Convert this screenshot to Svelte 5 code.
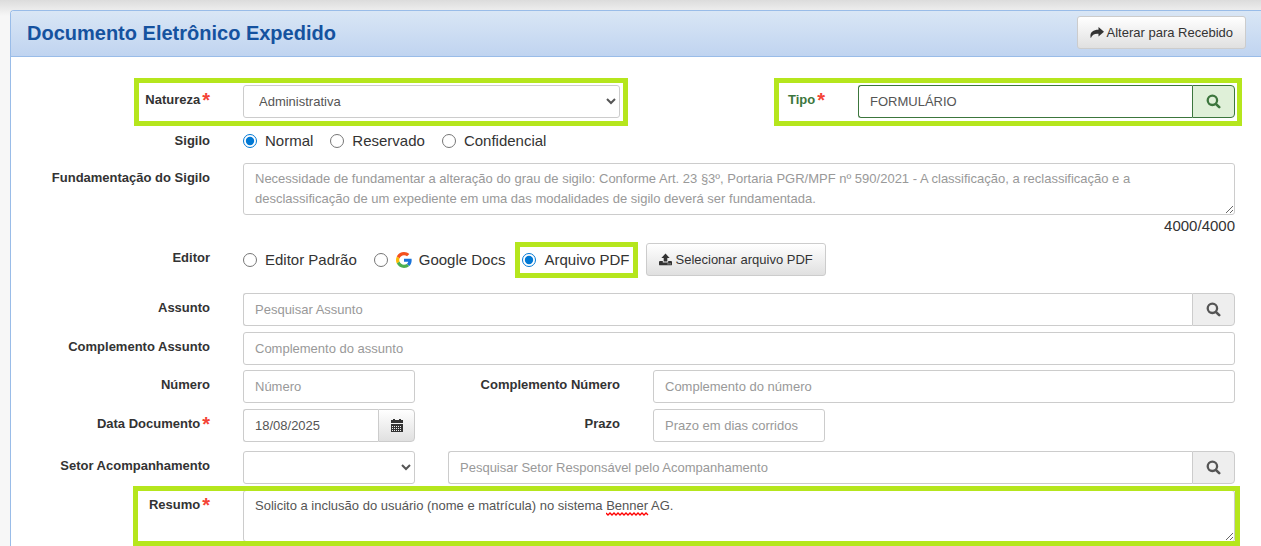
<script>
  let natureza = $state('Administrativa');
  let tipo = $state('FORMULÁRIO');
  let sigilo = $state('Normal');
  let fundamentacao = $state('');
  let editor = $state('pdf');
  let assunto = $state('');
  let dataDocumento = $state('18/08/2025');
  let setor = $state('');
  let resumo = $state('Solicito a inclusão do usuário (nome e matrícula) no sistema Benner AG.');

  const maxLength = 4000;
  const niveisSigilo = ['Normal', 'Reservado', 'Confidencial'];

  let restantes = $derived(maxLength - fundamentacao.length);
</script>

{#snippet searchIcon()}
  <svg class="icon" width="15" height="15" viewBox="0 0 15 15" aria-hidden="true">
    <circle cx="6.4" cy="6.3" r="4.7" fill="none" stroke="currentColor" stroke-width="2.3" />
    <path d="M9.8 9.8 L13.2 13.2" stroke="currentColor" stroke-width="2.6" stroke-linecap="round" />
  </svg>
{/snippet}

{#snippet required()}
  <span class="required">*</span>
{/snippet}

<div class="page">
  <section class="panel">
    <header class="panel-header">
      <h1>Documento Eletrônico Expedido</h1>
      <button type="button" class="btn">
        <svg width="14" height="12" viewBox="0 0 14 12" aria-hidden="true">
          <path fill="currentColor" d="M8.500 0 L14 4.800 L8.500 9.500 V6.800 C4.500 6.500 2.200 7.600 0.800 11.200 C-0.600 6.500 2 2.800 8.500 2.800 Z" />
        </svg>
        Alterar para Recebido
      </button>
    </header>

    <form class="form">
      <div class="row">
        <div class="group half mark mark-natureza">
          <label class="label" for="natureza">Natureza{@render required()}</label>
          <select id="natureza" class="control span-4" bind:value={natureza}>
            <option>Administrativa</option>
          </select>
        </div>
        <div class="group half success mark mark-tipo">
          <label class="label" for="tipo">Tipo{@render required()}</label>
          <div class="input-group span-4">
            <input id="tipo" class="control" type="text" bind:value={tipo} />
            <button type="button" class="addon" aria-label="Pesquisar tipo">{@render searchIcon()}</button>
          </div>
        </div>
      </div>

      <div class="row row-sigilo" role="radiogroup" aria-labelledby="sigilo-label">
        <span class="label label-flat" id="sigilo-label">Sigilo</span>
        <div class="radios span-10">
          {#each niveisSigilo as nivel}
            <label class="radio">
              <input type="radio" name="sigilo" value={nivel} bind:group={sigilo} />
              {nivel}
            </label>
          {/each}
        </div>
      </div>

      <div class="row row-wide">
        <label class="label" for="fundamentacao">Fundamentação do Sigilo</label>
        <div class="span-10">
          <textarea
            id="fundamentacao"
            class="control"
            maxlength={maxLength}
            placeholder="Necessidade de fundamentar a alteração do grau de sigilo: Conforme Art. 23 §3º, Portaria PGR/MPF nº 590/2021 - A classificação, a reclassificação e a desclassificação de um expediente em uma das modalidades de sigilo deverá ser fundamentada."
            bind:value={fundamentacao}
          ></textarea>
          <div class="counter">{restantes}/{maxLength}</div>
        </div>
      </div>

      <div class="row" role="radiogroup" aria-labelledby="editor-label">
        <span class="label" id="editor-label">Editor</span>
        <div class="radios span-10">
          <label class="radio">
            <input type="radio" name="editor" value="padrao" bind:group={editor} />
            Editor Padrão
          </label>
          <label class="radio">
            <input type="radio" name="editor" value="google" bind:group={editor} />
            <svg class="google" width="16" height="16" viewBox="0 0 48 48" aria-hidden="true">
              <path fill="#f4511e" d="M24 9.500c3.540 0 6.710 1.220 9.210 3.600l6.850-6.850C35.900 2.380 30.470 0 24 0 14.620 0 6.510 5.380 2.560 13.220l7.980 6.190C12.430 13.720 17.740 9.500 24 9.500z" />
              <path fill="#1a73d9" d="M46.980 24.550c0-1.570-.15-3.090-.38-4.550H24v9.020h12.940c-.58 2.960-2.260 5.480-4.780 7.180l7.730 6c4.510-4.180 7.090-10.360 7.090-17.650z" />
              <path fill="#fbbc05" d="M10.530 28.590c-.48-1.450-.76-2.990-.76-4.590s.27-3.140.76-4.590l-7.980-6.190C.92 16.460 0 20.120 0 24c0 3.880.92 7.540 2.560 10.780l7.970-6.190z" />
              <path fill="#4caf50" d="M24 48c6.480 0 11.930-2.130 15.890-5.810l-7.730-6c-2.150 1.450-4.920 2.300-8.160 2.300-6.260 0-11.570-4.220-13.470-9.910l-7.980 6.190C6.510 42.620 14.620 48 24 48z" />
            </svg>
            Google Docs
          </label>
          <label class="radio mark mark-pdf">
            <input type="radio" name="editor" value="pdf" bind:group={editor} />
            Arquivo PDF
          </label>
          <button type="button" class="btn">
            <svg width="13" height="13" viewBox="0 0 13 13" aria-hidden="true">
              <path fill="currentColor" d="M6.500 0.500 L10.600 5 H8.300 V8.600 H4.700 V5 H2.400 Z" />
              <path fill="currentColor" d="M1 8 H3.800 V9.500 H9.200 V8 H12 Q13 8 13 9 V11.400 Q13 12.300 12 12.300 H1 Q0 12.300 0 11.400 V9 Q0 8 1 8 Z" />
              <path d="M8.600 10.900 H9.500 M10.600 10.900 H11.500" stroke="#eee" stroke-width="1" />
            </svg>
            Selecionar arquivo PDF
          </button>
        </div>
      </div>

      <div class="row row-editor-end">
        <label class="label" for="assunto">Assunto</label>
        <div class="input-group span-10">
          <input id="assunto" class="control" type="text" placeholder="Pesquisar Assunto" bind:value={assunto} />
          <button type="button" class="addon" aria-label="Pesquisar assunto">{@render searchIcon()}</button>
        </div>
      </div>

      <div class="row">
        <label class="label" for="complemento-assunto">Complemento Assunto</label>
        <input id="complemento-assunto" class="control span-10" type="text" placeholder="Complemento do assunto" />
      </div>

      <div class="row row-tight">
        <label class="label" for="numero">Número</label>
        <input id="numero" class="control span-2" type="text" placeholder="Número" />
        <label class="label" for="complemento-numero">Complemento Número</label>
        <input id="complemento-numero" class="control span-6" type="text" placeholder="Complemento do número" />
      </div>

      <div class="row">
        <label class="label" for="data-documento">Data Documento{@render required()}</label>
        <div class="input-group span-2">
          <input id="data-documento" class="control" type="text" bind:value={dataDocumento} />
          <button type="button" class="addon addon-date" aria-label="Abrir calendário">
            <svg width="12" height="13" viewBox="0 0 12 13" aria-hidden="true">
              <path fill="currentColor" d="M0 1 H2 V0 H4 V1 H8 V0 H10 V1 H12 V4 H0 Z M0 5 H12 V13 H0 Z" />
              <path d="M1 7.500 H11 M1 9.500 H11 M1 11.500 H11" stroke="#eee" stroke-width="1" stroke-dasharray="1 1" />
            </svg>
          </button>
        </div>
        <label class="label" for="prazo">Prazo</label>
        <input id="prazo" class="control span-2" type="text" placeholder="Prazo em dias corridos" />
      </div>

      <div class="row row-setor">
        <label class="label" for="setor">Setor Acompanhamento</label>
        <select id="setor" class="control span-2" bind:value={setor}>
          <option value=""></option>
        </select>
        <div class="input-group span-8">
          <input
            class="control"
            type="text"
            aria-label="Setor responsável"
            placeholder="Pesquisar Setor Responsável pelo Acompanhamento"
          />
          <button type="button" class="addon" aria-label="Pesquisar setor">{@render searchIcon()}</button>
        </div>
      </div>

      <div class="row mark mark-resumo">
        <label class="label" for="resumo">Resumo{@render required()}</label>
        <div class="resumo span-10">
          <textarea id="resumo" class="control" spellcheck="false" bind:value={resumo}></textarea>
          <svg class="squiggle" width="43" height="4" viewBox="0 0 43 4" aria-hidden="true">
            <path
              d="M0 1 l2 2 l2 -2 l2 2 l2 -2 l2 2 l2 -2 l2 2 l2 -2 l2 2 l2 -2 l2 2 l2 -2 l2 2 l2 -2 l2 2 l2 -2 l2 2 l2 -2 l2 2 l2 -2 l2 2"
              fill="none"
              stroke="#f00"
              stroke-width="1.3"
            />
          </svg>
        </div>
      </div>
    </form>
  </section>
</div>

<style>
  :global(body) {
    margin: 0;
    background: #f7f7f7;
    font-family: 'Liberation Sans', Arial, sans-serif;
  }

  .page {
    box-sizing: border-box;
    min-height: 100vh;
    padding: 10px 0 0 10px;
    display: flex;
    background: linear-gradient(#dcdcdc, #f7f7f7 16px);
    color: #333;
    font-size: 13px;
    line-height: 20px;
  }

  .panel {
    flex: 1;
    border: 1px solid #99bce8;
    border-width: 1px 0 0 1px;
    border-top-left-radius: 4px;
    background: #fff;
    overflow: hidden;
  }

  .panel-header {
    display: flex;
    align-items: center;
    justify-content: space-between;
    box-sizing: border-box;
    height: 46px;
    padding: 0 15px 2px 16px;
    border-bottom: 1px solid #99bce8;
    background: linear-gradient(#d9e6f5, #c0d4f0);
  }

  h1 {
    margin: 0;
    color: #15529f;
    font-size: 20px;
    line-height: 24px;
  }

  .form {
    padding: 22px 26px 4px 27px;
  }

  .row,
  .group {
    display: grid;
    grid-template-columns: repeat(12, minmax(0, 1fr));
    column-gap: 33px;
    align-items: start;
  }

  .row {
    margin-top: 6px;
  }

  .group {
    grid-template-columns: subgrid;
  }

  .half {
    grid-column: span 6;
  }

  .span-2 {
    grid-column: span 2;
  }

  .span-4 {
    grid-column: span 4;
  }

  .span-6 {
    grid-column: span 6;
  }

  .span-8 {
    grid-column: span 8;
  }

  .span-10 {
    grid-column: span 10;
  }

  .row-tight {
    margin-top: 5px;
  }

  .row-sigilo {
    margin-top: 13px;
  }

  .row-wide {
    margin-top: 12px;
  }

  .row-editor-end {
    margin-top: 17px;
  }

  .row-setor {
    margin-top: 9px;
  }

  .label {
    grid-column: span 2;
    padding-top: 5px;
    font-weight: bold;
    text-align: right;
    white-space: nowrap;
  }

  .label-flat {
    padding-top: 0;
  }

  .required {
    margin-left: 2px;
    color: #f44336;
    font-size: 20px;
    line-height: 16px;
    vertical-align: -3px;
  }

  .control {
    box-sizing: border-box;
    display: block;
    width: 100%;
    min-width: 0;
    height: 33px;
    margin: 0;
    padding: 5px 11px;
    border: 1px solid #ccc;
    border-radius: 3px;
    background: #fff;
    color: #555;
    font: inherit;
  }

  .control::placeholder {
    color: #999;
  }

  select.control {
    padding-right: 0;
  }

  textarea.control {
    height: 52px;
    resize: vertical;
    overflow: auto;
  }

  .input-group {
    display: flex;
  }

  .input-group .control {
    flex: 1;
    border-right: 0;
    border-radius: 3px 0 0 3px;
  }

  .addon {
    box-sizing: border-box;
    display: flex;
    align-items: center;
    justify-content: center;
    width: 43px;
    padding: 0;
    border: 1px solid #ccc;
    border-radius: 0 4px 4px 0;
    background: #eee;
    color: #555;
  }

  .addon-date {
    width: 37px;
    background: linear-gradient(#fff, #e0e0e0);
    color: #333;
  }

  .success .label {
    color: #3c763d;
  }

  .success .control,
  .success .addon {
    border-color: #3c763d;
  }

  .success .addon {
    background: #dff0d8;
    color: #3c763d;
  }

  .btn {
    display: inline-flex;
    align-items: center;
    gap: 3px;
    box-sizing: border-box;
    height: 33px;
    padding: 0 12px;
    border: 1px solid #ccc;
    border-radius: 3px;
    background: linear-gradient(#fff, #e0e0e0);
    color: #333;
    font: inherit;
    white-space: nowrap;
  }

  .radios {
    display: flex;
    align-items: center;
    gap: 17px;
    font-size: 15px;
  }

  .radios .btn {
    font-size: 13px;
  }

  .radio {
    display: flex;
    align-items: center;
    gap: 8px;
    white-space: nowrap;
  }

  .radio input {
    width: 14px;
    height: 14px;
    margin: 0;
    accent-color: #0078d4;
  }

  .google {
    margin-right: -1px;
  }

  .counter {
    font-size: 15px;
    line-height: 22px;
    text-align: right;
  }

  .resumo {
    position: relative;
  }

  .squiggle {
    position: absolute;
    top: 22px;
    left: 363px;
  }

  /* highlighted fields */
  .mark {
    position: relative;
  }

  .mark::after {
    content: '';
    position: absolute;
    border: 5px solid #b5e61d;
    pointer-events: none;
  }

  .mark-natureza::after {
    inset: -7px -8px -8px 96px;
  }

  .mark-tipo::after {
    inset: -7px -7px -8px 121px;
  }

  .mark-pdf::after {
    inset: -8px -9px -8px -7px;
  }

  .mark-resumo::after {
    inset: -4px -5px -4px 95px;
  }
</style>
